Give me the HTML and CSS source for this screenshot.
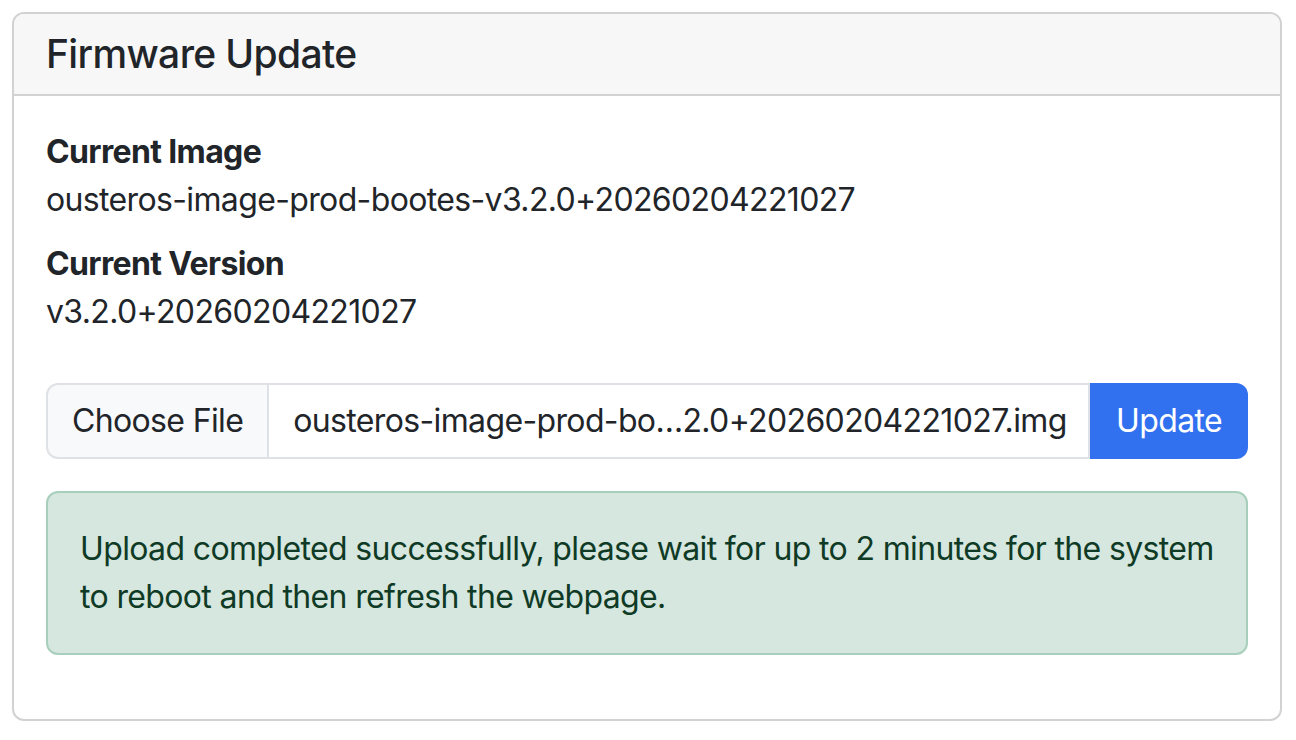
FILE: index.html
```html
<!DOCTYPE html>
<html lang="en">
<head>
    <meta charset="UTF-8">
    <meta name="viewport" content="width=device-width, initial-scale=1.0">
    <title>Firmware Update</title>
    <link rel="stylesheet" href="styles.css">
</head>
<body>
    <div class="card">
        <div class="card-header">
            <h5 class="card-title">Firmware Update</h5>
        </div>
        <div class="card-body">
            <div class="info">
                <div class="info-label">Current Image</div>
                <div class="info-value">ousteros-image-prod-bootes-v3.2.0+20260204221027</div>
            </div>
            <div class="info">
                <div class="info-label">Current Version</div>
                <div class="info-value">v3.2.0+20260204221027</div>
            </div>

            <form class="upload-group">
                <label class="file-button" for="firmware">Choose File</label>
                <span class="file-name">ousteros-image-prod-bo…2.0+20260204221027.img</span>
                <input type="file" id="firmware" class="file-input">
                <button type="submit" class="btn-primary">Update</button>
            </form>

            <div class="alert alert-success">
                Upload completed successfully, please wait for up to 2 minutes for the system to reboot and then refresh the webpage.
            </div>
        </div>
    </div>
</body>
</html>
```

FILE: styles.css
```css
:root {
    --text-color: #212529;
    --border-color: #d2d2d2;
    --input-border: #dee2e6;
    --primary-color: #3171f0;
    --radius: 12px;
}

* {
    margin: 0;
    padding: 0;
    box-sizing: border-box;
}

body {
    font-family: Inter, 'Noto Sans', sans-serif;
    font-size: 32px;
    line-height: 48px;
    letter-spacing: -0.02em;
    color: var(--text-color);
    background-color: white;
    padding: 12px 14px 12px 12px;
}

.card {
    border: 2px solid var(--border-color);
    border-radius: var(--radius);
    overflow: hidden;
}

.card-header {
    background-color: #f7f7f7;
    border-bottom: 2px solid var(--border-color);
    padding: 16px 32px;
}

.card-title {
    font-size: 39px;
    line-height: 48px;
    font-weight: 500;
}

.card-body {
    padding: 32px;
}

.info {
    margin-bottom: 16px;
}

.info-label {
    font-weight: 700;
}

.upload-group {
    display: flex;
    margin-top: 47px;
    height: 76px;
}

.file-button {
    display: flex;
    align-items: center;
    padding: 0 24px;
    background-color: #f8f9fa;
    border: 2px solid var(--input-border);
    border-radius: var(--radius) 0 0 var(--radius);
}

.file-name {
    flex: 1;
    display: flex;
    align-items: center;
    padding: 0 24px;
    border: 2px solid var(--input-border);
    border-left: none;
    white-space: nowrap;
    overflow: hidden;
}

.file-input {
    display: none;
}

.btn-primary {
    font: inherit;
    letter-spacing: inherit;
    color: white;
    background-color: var(--primary-color);
    border: none;
    padding: 0 26px;
    border-radius: 0 var(--radius) var(--radius) 0;
    cursor: pointer;
}

.alert {
    margin-top: 32px;
    margin-bottom: 32px;
    padding: 32px;
    border-radius: var(--radius);
}

.alert-success {
    background-color: #d5e7de;
    border: 2px solid #a8cfbc;
    color: #0f3a25;
}
```
